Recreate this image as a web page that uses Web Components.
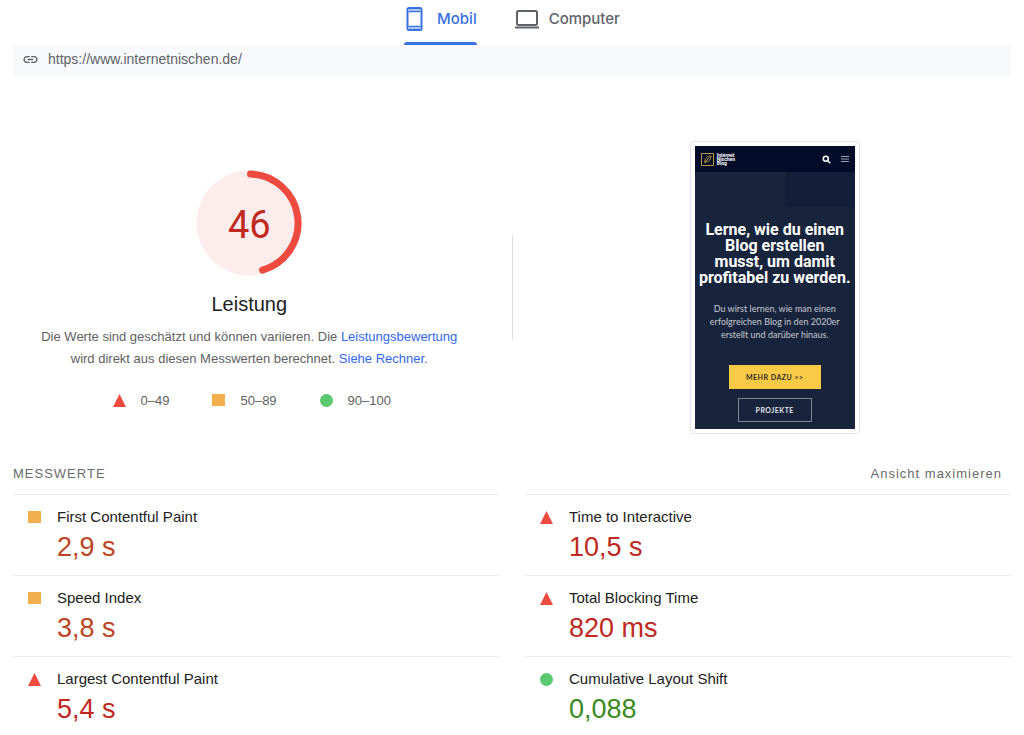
<!DOCTYPE html>
<html lang="de">
<head>
<meta charset="utf-8">
<meta name="viewport" content="width=device-width, initial-scale=1">
<title>PageSpeed Insights</title>
<style>
body { margin: 0; background: #fff; color: #212121; font-family: "Liberation Sans", Arial, sans-serif; }
</style>
</head>
<body>
<report-page></report-page>
<script>
function define(name, html, setup) {
  const template = document.createElement('template');
  template.innerHTML = html;
  customElements.define(name, class extends HTMLElement {
    constructor() {
      super();
      this.attachShadow({ mode: 'open' }).append(template.content.cloneNode(true));
    }
    connectedCallback() { if (setup) setup(this, this.shadowRoot); }
  });
}

define('device-tab', `
<style>
:host { display: block; }
button { display: flex; align-items: center; gap: 10px; height: 45px; padding: 0 0 7px; border: 0; background: none; color: #5f6368; font: 500 15px/20px Inter, sans-serif; cursor: pointer; box-sizing: border-box; position: relative; }
button[aria-selected=true] { color: #3871e0; }
button[aria-selected=true]::after { content: ""; position: absolute; left: 0; right: 0; bottom: 0; height: 3px; border-radius: 3px 3px 0 0; background: #3871e0; }
::slotted(svg) { display: block; flex: none; }
</style>
<button role="tab"><slot name="icon"></slot><slot></slot></button>`,
(el, root) => root.querySelector('button').setAttribute('aria-selected', el.hasAttribute('selected')));

define('url-bar', `
<style>
:host { display: flex; align-items: center; gap: 9px; padding: 4px 9px 8px; background: #f8f9fb; color: #5f6368; font-size: 14px; line-height: 20px; }
svg { display: block; }
</style>
<svg width="17" height="17" viewBox="0 0 24 24" fill="#5f6368" aria-hidden="true"><path d="M3.9 12c0-1.71 1.39-3.1 3.1-3.1h4V7H7c-2.76 0-5 2.24-5 5s2.24 5 5 5h4v-1.9H7c-1.71 0-3.1-1.39-3.1-3.1zM8 13h8v-2H8v2zm9-6h-4v1.9h4c1.71 0 3.1 1.39 3.1 3.1s-1.39 3.1-3.1 3.1h-4V17h4c2.76 0 5-2.24 5-5s-2.24-5-5-5z"/></svg>
<span><slot></slot></span>`);

define('score-marker', `
<style>
:host { display: block; width: 13px; height: 13px; flex: none; }
svg { display: block; }
</style>
<svg width="13" height="13" viewBox="0 0 13 13" aria-hidden="true"></svg>`,
(el, root) => {
  root.querySelector('svg').innerHTML = {
    fail: '<path d="M6.5 0 13 13H0z" fill="#ee4b40"/>',
    average: '<path d="M0 0h13v12H0z" fill="#f3ae4e"/>',
    pass: '<circle cx="6.5" cy="6.5" r="6.5" fill="#5bc970"/>'
  }[el.getAttribute('rating')];
});

define('score-gauge', `
<style>
:host { display: grid; place-items: center; }
svg, span { grid-area: 1 / 1; display: block; }
span { color: #c0291f; font: 400 38px/44px Roboto, sans-serif; padding-top: 4px; }
</style>
<svg width="106" height="106" viewBox="0 0 106 106" aria-hidden="true">
<circle cx="53" cy="53" r="52.5" fill="#fdecec"/>
<path d="M54.5 4A49 49 0 0 1 66.500 100.100" fill="none" stroke="#ee4b40" stroke-width="7" stroke-linecap="round"/>
</svg>
<span><slot></slot></span>`);

define('score-legend', `
<style>
:host { display: flex; justify-content: center; gap: 43px; padding-left: 5px; color: #616161; font-size: 13px; line-height: 20px; }
div { display: flex; align-items: center; gap: 15px; }
</style>
<div><score-marker rating="fail"></score-marker><span>0–49</span></div>
<div><score-marker rating="average"></score-marker><span>50–89</span></div>
<div><score-marker rating="pass"></score-marker><span>90–100</span></div>`);

define('page-preview', `
<style>
:host { display: block; width: 160px; padding: 4px; border: 1px solid #e4e4e4; border-radius: 4px; }
.screen { background: #18243c; color: #fff; text-align: center; padding-bottom: 7px; }
header { display: flex; align-items: center; height: 26px; padding: 0 6px; background: #020c28; }
.brand { margin-left: 3px; font: 700 5px/4px Roboto, sans-serif; text-align: left; margin-right: auto; }
.menu { margin-left: 10px; }
svg { display: block; }
.hero { background: linear-gradient(#131e38, #131e38) right top / 70px 35px no-repeat; padding: 50px 4px 0; }
h2 { margin: 0; font: 700 16px/16px Roboto, sans-serif; white-space: nowrap; }
p { margin: 16px 0 24px; color: #c6cad2; font: 400 9px/13px Lato, sans-serif; white-space: nowrap; }
a { display: block; box-sizing: border-box; height: 24px; margin: 0 auto; font: 700 7px/24px Lato, sans-serif; letter-spacing: 0.5px; text-decoration: none; }
.more { width: 92px; background: #f8ca45; color: #2e2c2a; }
.projects { width: 74px; margin-top: 9px; border: 1px solid #7e8694; color: #e4e6ea; line-height: 22px; }
</style>
<div class="screen">
<header>
<svg width="13" height="13" viewBox="0 0 13 13" fill="none" stroke="#b99a3b" aria-hidden="true"><path d="M.5.5h12v12H.5z"/><path d="M3 10 8.500 4.500M4 9C3.500 5.500 6 3 10 3c0 4-2.500 6-6 6z"/></svg>
<div class="brand">Internet<br>Nischen<br>Blog</div>
<svg width="9" height="9" viewBox="0 0 9 9" fill="none" stroke="#fff" stroke-width="1.500" aria-hidden="true"><circle cx="3.800" cy="3.800" r="2.500"/><path d="m5.700 5.700 2.500 2.500"/></svg>
<svg class="menu" width="8" height="8" viewBox="0 0 8 8" stroke="#c9ccd4" stroke-width=".8" aria-hidden="true"><path d="M0 1.500h8M0 4h8M0 6.500h8"/></svg>
</header>
<div class="hero">
<h2>Lerne, wie du einen<br>Blog erstellen<br>musst, um damit<br>profitabel zu werden.</h2>
<p>Du wirst lernen, wie man einen<br>erfolgreichen Blog in den 2020er<br>erstellt und darüber hinaus.</p>
<a class="more" href="#">MEHR DAZU &gt;&gt;</a>
<a class="projects" href="#">PROJEKTE</a>
</div>
</div>`);

define('metric-item', `
<style>
:host { display: grid; grid-template-columns: 13px 1fr; column-gap: 16px; row-gap: 4px; padding: 12px 15px; border-top: 1px solid #ebebeb; }
score-marker { align-self: center; }
.name { font-size: 15px; line-height: 20px; }
.value { grid-column: 2; font-size: 27px; line-height: 32px; }
:host([rating=fail]) .value { color: #c0291f; }
:host([rating=average]) .value { color: #bd4524; }
:host([rating=pass]) .value { color: #3a8a24; }
</style>
<score-marker></score-marker>
<span class="name"><slot></slot></span>
<span class="value"><slot name="value"></slot></span>`,
(el, root) => {
  const old = root.querySelector('score-marker');
  const marker = document.createElement('score-marker');
  marker.setAttribute('rating', el.getAttribute('rating'));
  old.replaceWith(marker);
});

define('report-page', `
<style>
:host { display: block; padding: 0 13px; }
nav { display: flex; justify-content: center; gap: 38px; }
.summary { display: grid; grid-template-columns: 1fr 1px 1fr; column-gap: 26px; align-items: center; padding-top: 64px; }
.score { padding-top: 5px; text-align: center; }
h1 { margin: 16px 0 10px; font-size: 20px; line-height: 24px; font-weight: 400; }
p { margin: 0 0 21px; color: #616161; font-size: 13px; line-height: 22px; }
p a { color: #3367f0; text-decoration: none; }
.divider { height: 105px; background: #e0e0e0; }
page-preview { justify-self: center; }
.bar { display: flex; justify-content: space-between; padding: 30px 9px 10px 0; color: #6a6a6a; font-size: 13px; line-height: 20px; letter-spacing: 1px; }
h2 { margin: 0; font: inherit; letter-spacing: inherit; }
button { border: 0; padding: 0; background: none; color: inherit; font: inherit; letter-spacing: inherit; cursor: pointer; }
.metrics { display: grid; grid-template-columns: 1fr 1fr; column-gap: 26px; }
</style>
<nav role="tablist">
<device-tab selected><svg slot="icon" width="23" height="26" viewBox="0 0 23 26" aria-hidden="true"><rect x="3.500" y="2" width="14" height="22" rx="1.500" fill="#fff" stroke="#3871e0" stroke-width="2"/><path d="M4.500 5.500h12M4.500 20.500h12" stroke="#3871e0" stroke-width="1.500"/><path d="M4.500 3h12v2h-12zM4.500 21h12v2h-12z" fill="#a9c3f5"/></svg>Mobil</device-tab>
<device-tab><svg slot="icon" width="24" height="20" viewBox="0 0 24 20" fill="none" stroke="#5f6368" stroke-width="2" aria-hidden="true"><rect x="2" y="2" width="20" height="14" rx="1.500"/><path d="M0 18.500h24"/></svg>Computer</device-tab>
</nav>
<url-bar>https://www.internetnischen.de/</url-bar>
<section class="summary">
<div class="score">
<score-gauge>46</score-gauge>
<h1>Leistung</h1>
<p>Die Werte sind geschätzt und können variieren. Die <a href="#">Leistungsbewertung</a><br>wird direkt aus diesen Messwerten berechnet. <a href="#">Siehe Rechner.</a></p>
<score-legend></score-legend>
</div>
<div class="divider"></div>
<page-preview></page-preview>
</section>
<div class="bar"><h2>MESSWERTE</h2><button>Ansicht maximieren</button></div>
<section class="metrics">
<metric-item rating="average">First Contentful Paint<span slot="value">2,9 s</span></metric-item>
<metric-item rating="fail">Time to Interactive<span slot="value">10,5 s</span></metric-item>
<metric-item rating="average">Speed Index<span slot="value">3,8 s</span></metric-item>
<metric-item rating="fail">Total Blocking Time<span slot="value">820 ms</span></metric-item>
<metric-item rating="fail">Largest Contentful Paint<span slot="value">5,4 s</span></metric-item>
<metric-item rating="pass">Cumulative Layout Shift<span slot="value">0,088</span></metric-item>
</section>`);
</script>
</body>
</html>
